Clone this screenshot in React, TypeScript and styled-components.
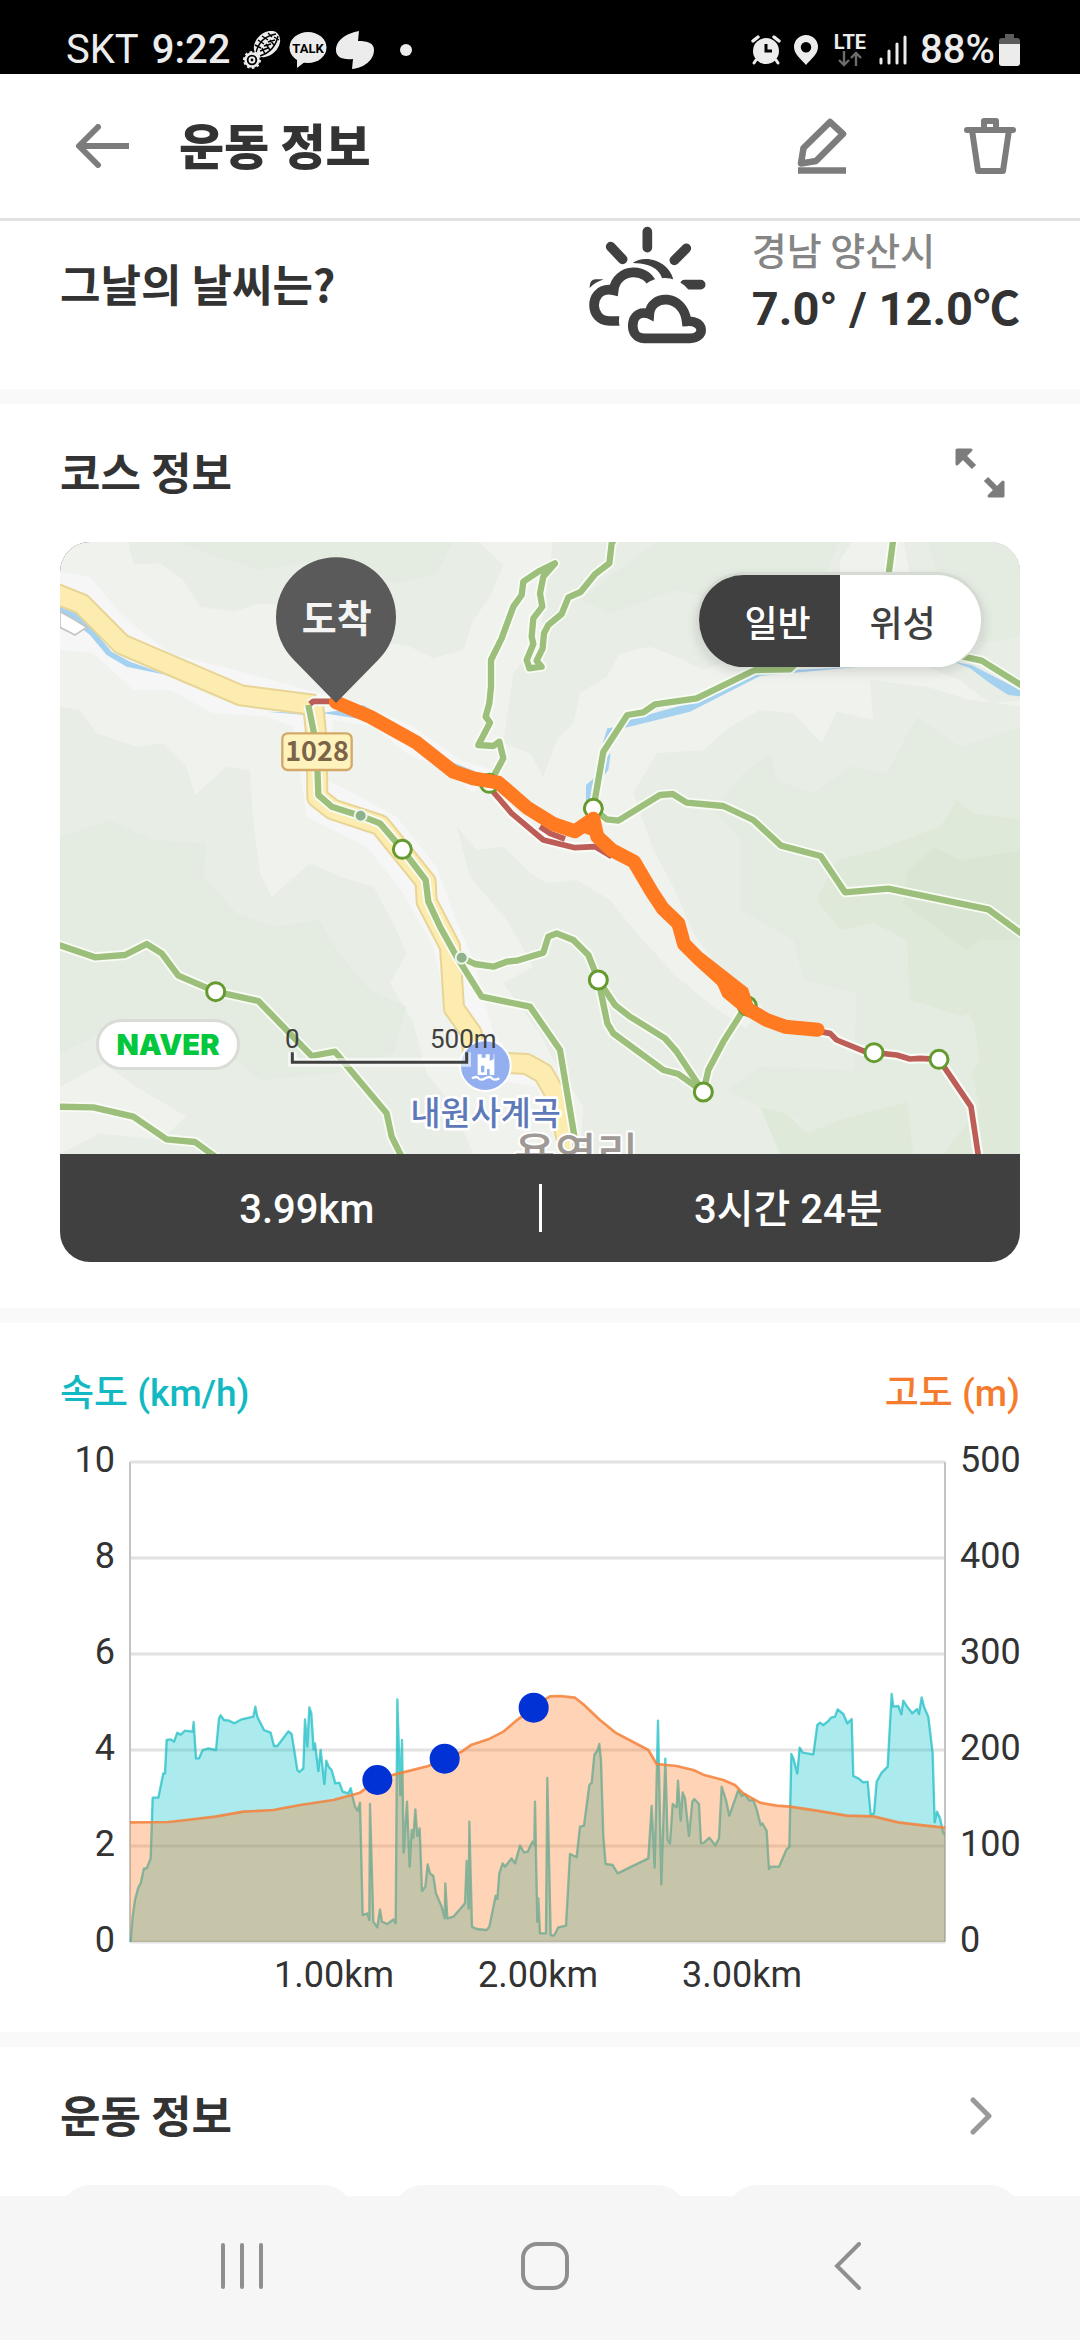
import React, { useState } from "react";
import styled, { createGlobalStyle } from "styled-components";

const sans = `"Noto Sans CJK KR", "Noto Sans", sans-serif`;
const mixed = `Roboto, "Noto Sans CJK KR", sans-serif`;
const roboto = `Roboto, "Noto Sans", sans-serif`;

const color = {
  ink: "#333333",
  dark: "#404040",
  grey: "#7c7c7c",
  band: "#f9f9f9",
  soft: "#f6f6f6",
  teal: "#12b9c2",
  orange: "#f57c2e",
};

const GlobalStyle = createGlobalStyle`
  * { box-sizing: border-box; }
  body { margin: 0; background: #fff; font-family: ${sans}; color: ${color.ink}; }
  h1, h2, p { margin: 0; }
  button { border: 0; padding: 0; background: none; font: inherit; color: inherit; cursor: pointer; }
  svg { display: block; flex: none; }
`;

const Screen = styled.div`
  height: 100vh;
  display: flex;
  flex-direction: column;
  overflow: hidden;
`;

/* ---------- status bar ---------- */

const StatusBar = styled.div`
  height: 74px;
  flex: none;
  display: flex;
  justify-content: space-between;
  padding: 25px 60px 0 66px;
  background: #000;
  color: #ececec;
  font: 400 40px/50px ${roboto};
`;

const StatusGroup = styled.div<{ $gap: number }>`
  display: flex;
  align-items: center;
  gap: ${(p) => p.$gap}px;
`;

const Strong = styled.span`
  font-weight: 500;
`;

const Clock = styled(Strong)`
  margin: 0 5px;
`;

const Network = styled.div`
  display: flex;
  flex-direction: column;
  align-items: center;
  margin-left: 3px;
  font: 700 20px/18px ${roboto};
`;

/* ---------- app bar ---------- */

const AppBar = styled.header`
  height: 147px;
  flex: none;
  display: flex;
  align-items: center;
  padding: 0 60px 0 72px;
  border-bottom: 3px solid #e2e2e2;
`;

const Title = styled.h1`
  flex: 1;
  margin-left: 47px;
  padding-bottom: 4px;
  font-size: 49px;
  line-height: 60px;
  font-weight: 900;
`;

const IconButton = styled.button`
  width: 60px;
  height: 60px;
  display: flex;
  align-items: center;
  justify-content: center;
  color: ${color.grey};
`;

const Actions = styled.div`
  display: flex;
  gap: 108px;
`;

/* ---------- content ---------- */

const Content = styled.main`
  flex: 1;
  min-height: 0;
  overflow-y: auto;
  scrollbar-width: none;
`;

const Section = styled.section<{ $last?: boolean }>`
  padding: 0 60px;
  border-bottom: ${(p) => (p.$last ? "0" : `15px solid ${color.band}`)};
`;

const SectionTitle = styled.h2`
  padding-bottom: 4px;
  font-size: 44px;
  line-height: 54px;
  font-weight: 700;
`;

const WeatherSection = styled(Section)`
  display: flex;
  justify-content: space-between;
  align-items: flex-start;
  height: 183px;
  padding-top: 5px;
`;

const WeatherTitle = styled(SectionTitle)`
  margin-top: 30px;
`;

const Weather = styled.div`
  display: flex;
  gap: 46px;
`;

const Place = styled.p`
  font-size: 38px;
  line-height: 46px;
  font-weight: 500;
  color: #858585;
`;

const Temperature = styled.p`
  font: 700 47px/74px ${mixed};
  white-space: nowrap;
`;

const SectionHead = styled.div`
  height: 138px;
  display: flex;
  align-items: center;
  justify-content: space-between;
  padding-right: 9px;
`;

/* ---------- course card ---------- */

const CourseSection = styled(Section)`
  padding-bottom: 46px;
`;

const CourseCard = styled.div`
  border-radius: 30px;
  overflow: hidden;
  background: ${color.dark};
`;

const MapArea = styled.div`
  position: relative;
`;

const MapSvg = styled.svg`
  width: 100%;
  height: auto;
`;

const MapToggle = styled.div`
  position: absolute;
  top: 30px;
  right: 36px;
  display: flex;
  border: 3px solid #d5dad2;
  border-bottom-width: 0;
  border-radius: 50px;
  overflow: hidden;
  box-shadow: 0 5px 12px rgba(0, 0, 0, 0.12);
`;

const ToggleButton = styled.button<{ $on: boolean }>`
  width: 141px;
  height: 92px;
  font-size: 36px;
  line-height: 44px;
  font-weight: 500;
  background: ${(p) => (p.$on ? color.dark : "#fff")};
  color: ${(p) => (p.$on ? "#fff" : color.dark)};
  &:first-child { padding-left: 16px; }
  &:last-child { padding-right: 16px; }
`;

const Naver = styled.a`
  position: absolute;
  left: 36px;
  bottom: 84px;
  width: 144px;
  height: 51px;
  display: flex;
  align-items: center;
  justify-content: center;
  border: 3px solid #d9dcd6;
  border-radius: 26px;
  background: #fff;
  color: #03c73c;
  font: 900 29px/36px Inter, sans-serif;
  text-decoration: none;
`;

const Stats = styled.div`
  height: 108px;
  display: flex;
  align-items: center;
  color: #fff;
  font: 500 40px/56px ${mixed};
`;

const Stat = styled.p`
  flex: 1;
  padding: 3px 0 0 15px;
  text-align: center;
`;

const StatRule = styled.span`
  width: 3px;
  height: 48px;
  background: #fff;
`;

/* ---------- chart ---------- */

const ChartSection = styled(Section)`
  padding-bottom: 32px;
`;

const ChartHead = styled.div`
  display: flex;
  justify-content: space-between;
  padding: 49px 0 14px;
`;

const SeriesName = styled.h2<{ $color: string }>`
  font: 500 37px/44px ${mixed};
  color: ${(p) => p.$color};
`;

const ChartSvg = styled.svg`
  width: 100%;
  height: auto;
`;

/* ---------- bottom ---------- */

const Cards = styled.div`
  display: grid;
  grid-template-columns: repeat(3, 1fr);
  gap: 40px;
`;

const Card = styled.div`
  height: 200px;
  border-radius: 30px;
  background: ${color.soft};
`;

const NavBar = styled.nav`
  height: 144px;
  flex: none;
  display: grid;
  grid-template-columns: repeat(3, 1fr);
  place-items: center;
  padding: 0 80px 4px 90px;
  background: ${color.soft};
`;

const NavButton = styled(IconButton)`
  color: #8f8f8f;
`;

/* ---------- icons ---------- */

const TreadIcon = () => (
  <svg width="38" height="38" viewBox="0 0 38 38" fill="none" stroke="#ececec">
    <ellipse cx="24" cy="13" rx="15" ry="11" transform="rotate(-45 24 13)" fill="#ececec" stroke="none" />
    <g stroke="#000" strokeWidth="1.4">
      <path d="M13 22C15 12 22 5 33 3M17 25C26 22 33 15 35 5" />
      <path d="M12 14l6 3M15 9l6 4M19 5l6 4M25 2l4 4M19 17l3 6M23 13l4 6M27 9l4 5M31 6l5 3M17 20l8-3M21 15l7-2M25 11l7-2" />
    </g>
    <circle cx="9" cy="29" r="6.5" strokeWidth="2.5" />
    <circle cx="9" cy="29" r="8" strokeWidth="2" strokeDasharray="2.6 2.4" />
    <circle cx="9" cy="29" r="2.4" strokeWidth="2" />
  </svg>
);

const TalkIcon = () => (
  <svg width="38" height="36" viewBox="0 0 38 36">
    <ellipse cx="19" cy="15.5" rx="18.5" ry="15.5" fill="#ececec" />
    <path d="M8 24l0 12 9-7z" fill="#ececec" />
    <text x="19" y="20.5" textAnchor="middle" fontFamily="Roboto, sans-serif" fontWeight="700" fontSize="13" fill="#000">TALK</text>
  </svg>
);

const LeafIcon = () => (
  <svg width="40" height="38" viewBox="0 0 40 38" fill="#ececec">
    <path d="M24 0C12 2 1 9 1 19c0 7 6 10 17 9l-1 10c12-1 22-9 22-19 0-7-6-9-16-9z" />
  </svg>
);

const DotIcon = () => (
  <svg width="50" height="38" viewBox="0 0 50 38"><circle cx="23" cy="19" r="6" fill="#ececec" /></svg>
);

const AlarmIcon = () => (
  <svg width="30" height="30" viewBox="0 0 30 30" fill="none" stroke="#ececec" strokeLinecap="round">
    <circle cx="15" cy="16" r="13" fill="#ececec" stroke="none" />
    <path d="M2 6l5-4M28 6l-5-4" strokeWidth="3.4" />
    <path d="M5 25l-2 3M25 25l2 3" strokeWidth="3" />
    <path d="M15 9v7h6" stroke="#000" strokeWidth="3" strokeLinecap="butt" />
  </svg>
);

const PlaceIcon = () => (
  <svg width="24" height="30" viewBox="0 0 24 30" fill="#ececec">
    <path fillRule="evenodd" d="M12 0a12 12 0 0 0-12 12c0 7 7 12 12 18 5-6 12-11 12-18A12 12 0 0 0 12 0zm0 7a5 5 0 1 1 0 10.500A5 5 0 0 1 12 7z" />
  </svg>
);

const DataIcon = () => (
  <svg width="24" height="16" viewBox="0 0 24 16" fill="none" stroke="#6c6c6c" strokeWidth="2.4">
    <path d="M6 0v14M1 9l5 5 5-5M18 15V2M13 7l5-5 5 5" />
  </svg>
);

const SignalIcon = () => (
  <svg width="28" height="30" viewBox="0 0 28 30" stroke="#ececec" strokeWidth="3" strokeLinecap="round">
    <path d="M2 24v4M10 16v12M18 9v19M26 2v26" />
  </svg>
);

const BatteryIcon = () => (
  <svg width="21" height="32" viewBox="0 0 21 32">
    <path d="M6 0h9v4h3a3 3 0 0 1 3 3v4H0V7a3 3 0 0 1 3-3h3z" fill="#5c5c5c" />
    <path d="M0 10h21v19a3 3 0 0 1-3 3H3a3 3 0 0 1-3-3z" fill="#ececec" />
  </svg>
);

const BackIcon = () => (
  <svg width="54" height="44" viewBox="0 0 54 44" fill="none" stroke="currentColor" strokeWidth="6">
    <path d="M54 22H4" />
    <path d="M23 3L4 22l19 19" strokeLinecap="round" strokeLinejoin="round" />
  </svg>
);

const PencilIcon = () => (
  <svg width="50" height="56" viewBox="0 0 50 56" fill="none" stroke="currentColor" strokeWidth="6.500" strokeLinejoin="round">
    <path d="M4 45.500L6.500 30 33 4 46 16 19 43z" />
    <path d="M1 52.500h48" />
  </svg>
);

const TrashIcon = () => (
  <svg width="52" height="56" viewBox="0 0 52 56" fill="none" stroke="currentColor" strokeWidth="6" strokeLinejoin="round">
    <path d="M3 12h46" strokeLinecap="round" />
    <path d="M20 12V3h12v9M8 12l6 41h25l6-41" />
  </svg>
);

const WeatherIcon = () => (
  <svg width="117" height="118" viewBox="0 0 351 354" fill="none" stroke={color.dark} strokeWidth="29" strokeLinecap="round">
    <path d="M175 17v48M65 62l36 38M292 67l-36 36M287 176h48" />
    <path d="M2 186c0-18 6-26 18-26h24C28 166 12 174 2 186z" fill={color.dark} stroke="none" />
    <path d="M131 111c40-30 124-2 124 68h-30c-6-44-30-66-94-68z" fill={color.dark} stroke="none" />
    <path d="M99 285H62c-62 0-62-94-2-94 7 0 10 1 14 2 8-70 108-72 119-5" strokeLinecap="butt" fill="#fff" />
    <path d="M170 335c-72 0-70-98-8-98 10-74 120-74 130 6 60 4 58 92 4 92z" stroke="#fff" strokeWidth="52" />
    <path d="M165 335c-45 0-45-76 0-76 8 0 14 2 16 3 4-60 102-62 112 22 56-4 56 51 10 51z" fill="#fff" transform="translate(0 2)" />
  </svg>
);

const ExpandIcon = () => (
  <svg width="52" height="50" viewBox="0 0 52 50" fill="currentColor" stroke="currentColor" strokeWidth="6">
    <path d="M2 2h14L2 16zM48 48H34l14-14z" strokeWidth="3" strokeLinejoin="round" />
    <path d="M5 5l14 14M31 31l14 14" />
  </svg>
);

const ChevronIcon = () => (
  <svg width="24" height="38" viewBox="0 0 24 38" fill="none" stroke="#999" strokeWidth="5" strokeLinecap="round" strokeLinejoin="round">
    <path d="M4 3l16 16L4 35" />
  </svg>
);

/* ---------- map ---------- */

const trails = [
  "M745 495L770 620 775 765 815 800 900 827 960 850 1027 928 1097 1020 1105 1085 1140 1160 1190 1250 1265 1370 1410 1400 1500 1530 1545 1800 1550 1860",
  "M1205 1253L1245 1272 1300 1280 1340 1265 1370 1262 1450 1238 1465 1190 1490 1180 1540 1200 1585 1245 1615 1320 1665 1395 1710 1430 1815 1495 1850 1535 1930 1656",
  "M1615 1320L1642 1450 1660 1480 1810 1590 1855 1602 1930 1656 1945 1590 1990 1505 2060 1395",
  "M-10 1213L105 1252 195 1245 260 1212 305 1240 355 1307 467 1355 595 1383 755 1548 825 1535 980 1720 995 1790 1030 1860",
  "M-10 1700L100 1702 220 1730 320 1798 405 1806 480 1860",
  "M1300 710L1330 655 1318 605 1300 618 1255 615 1290 548 1277 530 1288 490 1293 440 1293 360 1325 295 1360 200 1385 165 1390 125 1435 95 1485 70 1450 110 1440 160 1447 200 1420 235 1415 290 1420 312 1400 360 1408 385 1445 380 1430 362 1448 325 1452 280 1465 255 1505 222 1525 172 1562 156 1605 103 1648 70 1655 10 1665 -5",
  "M1600 805L1630 635 1702 525 1750 517 1785 493 1910 475 2085 390 2190 388 2240 340 2600 320 2710 350 2765 362 2890 440",
  "M1600 805L1640 838 1675 842 1800 765 1838 762 1880 788 1990 798 2080 840 2163 917 2282 948 2355 1057 2485 1046 2785 1108 2890 1185",
  "M2485 110L2500 -5",
];

const redPaths = [
  "M750 492L760 484 830 484",
  "M1295 750L1355 820 1450 900 1545 923 1605 920 1655 950",
  "M1440 860L1470 880 1515 897",
  "M2280 1475L2310 1480 2330 1500 2415 1535 2510 1545 2550 1557 2580 1555 2637 1558 2733 1700 2757 1860",
];

const lakes = [
  "M0 200L60 225 100 270 155 335 210 365 320 405 200 380 140 345 90 285 0 215z",
  "M620 515L740 525 850 510 910 495 1040 575 1160 660 1260 700 1180 690 1050 610 920 540 790 520z",
  "M1690 565L1705 540 1890 490 2090 395 2400 380 2100 408 1890 515z",
  "M2680 365L2735 375 2890 455 2890 470 2845 465 2790 430 2730 385z",
  "M1628 610L1642 565 1665 562 1638 625zM1640 650L1652 640 1645 690 1628 710zM1578 735L1605 712 1595 780 1578 785z",
  "M1390 790L1440 830 1480 850 1430 830z",
];

const terrain: [string, string][] = [
  ["#e8ede6", "M205 0H1250L1330 75 1290 170 1240 240 1210 330 1120 355 1050 320 930 300 850 200 600 190 520 215 420 200 370 120 300 70 220 72z"],
  ["#e4ece1", "M340 0H1180L1130 100 1010 130 780 60 600 90 470 50z"],
  ["#e8ede6", "M1480 0H2380L2340 60 2340 230 2480 300 2200 350 2080 340 1930 390 1850 350 1770 320 1680 340 1640 410 1560 460 1540 550 1490 600 1450 710 1410 640 1330 610 1360 400 1440 300z"],
  ["#e4ece1", "M1800 0H2340L2290 110 2150 150 2040 200 1850 150 1650 220 1560 180 1660 100z"],
  ["#e8ede6", "M2530 0H2890V480L2790 490 2700 420 2600 380 2560 160z"],
  ["#e4ece1", "M2600 0H2890V290L2770 310 2660 180z"],
  ["#e8ede6", "M0 500L60 510 110 580 230 620 310 610 380 680 405 765 500 680 570 690 580 850 600 1000 635 1070 750 970 840 1010 940 1040 1000 1150 1040 1240 990 1330 1060 1450 1100 1600 1180 1700 1240 1842H0z"],
  ["#e4ece1", "M0 890L150 840 280 900 440 910 430 1010 530 1120 640 1160 780 1140 830 1230 930 1350 1040 1400 1000 1540 830 1600 600 1620 460 1500 300 1560 130 1480 0 1540z"],
  ["#f0f2ed", "M0 1640L130 1570 230 1640 380 1730 300 1800 120 1780 0 1842z"],
  ["#e8ede6", "M1190 860L1250 930 1330 920 1410 1000 1460 1030 1550 1020 1650 1080 1730 1180 1850 1310 1960 1400 2080 1480 2150 1842H1560L1570 1700 1480 1560 1440 1480 1330 1330 1420 1280 1340 1140 1230 1010z"],
  ["#e8ede6", "M2430 420L2600 440 2730 480 2890 500V1842H2060L2030 1500 2110 1400 1980 1290 1900 1180 1840 1040 1780 930 1720 760 1790 640 1930 630 2010 560 2100 510 2200 520 2285 610 2330 515 2440 540z"],
  ["#e4ece1", "M2050 700L2130 640 2150 720 2260 760 2370 680 2480 700 2570 530 2700 620 2890 560V1842H2180L2220 1740 2100 1700 2000 1650 2100 1580 2380 1590 2390 1360 2230 1320 2200 1200 2040 1110 2040 900 1960 810z"],
  ["#dfe9d9", "M2330 960L2450 930 2640 860 2690 780 2740 820 2890 840V1842H2160L2100 1700 2180 1720 2240 1780 2340 1740 2560 1680 2690 1660 2760 1560 2740 1440 2550 1380 2540 1200 2440 1150 2340 1170 2270 1080z"],
  ["#d9e6d3", "M2540 1000L2620 920 2700 960 2890 930V1200L2760 1200 2720 1230 2650 1180 2530 1090z"],
  ["#e4ece1", "M2540 1480L2730 1420 2720 1540 2760 1700 2650 1842H2560L2540 1680z"],
];

const valley = "M0 95L90 110 190 230 330 340 560 400 710 440 900 490 1060 560 1200 660 1300 690 1240 760 1150 690 1040 640 940 560 820 540 800 720 880 760 1010 830 1130 980 1180 1120 1240 1260 1300 1480 1380 1580 1540 1700 1500 1842 1430 1640 1300 1620 1180 1500 1120 1220 1030 1060 920 920 740 830 700 560 620 530 460 520 330 450 220 450 100 340 0 330z";

const stations = [
  [1027, 928], [1288, 730], [1600, 805], [467, 1355], [1615, 1320],
  [1930, 1656], [2442, 1538], [2637, 1558], [2062, 1398],
];

const roadWide = "M-20 158L65 192 185 313 542 466 765 495";
const roadNarrow = "M760 500L770 600 772 772 818 808 960 855 1097 1025 1100 1085 1170 1220 1182 1405 1235 1480 1240 1560 1330 1568 1400 1572 1450 1600 1490 1670 1535 1860";

const CourseMap = () => (
  <MapSvg viewBox="0 6 2880 1836" role="img" aria-label="코스 지도">
    <rect y="0" width="2880" height="1842" fill="#f0f2ed" />
    {terrain.map(([fill, d]) => <path key={d} d={d} fill={fill} />)}
    <path d={valley} fill="#f5f6f5" />
    {lakes.map((d) => <path key={d} d={d} fill="#a5d1f0" />)}
    <path d="M0 215L45 240 80 262 45 285 0 262z" fill="#fff" stroke="#c4c4c4" strokeWidth="5" />

    <g fill="none" strokeLinejoin="round">
      <path d={roadNarrow} stroke="#e8d596" strokeWidth="66" />
      <path d={roadWide} stroke="#e8d596" strokeWidth="66" />
      <path d={roadNarrow} stroke="#fcecb0" strokeWidth="54" />
      <path d={roadWide} stroke="#fcecb0" strokeWidth="54" />
      <g stroke="#f9fbf5" strokeWidth="30">
        {trails.map((d) => <path key={d} d={d} />)}
        {redPaths.map((d) => <path key={d} d={d} />)}
      </g>
      <g stroke="#9dbf7c" strokeWidth="19">
        {trails.map((d) => <path key={d} d={d} />)}
      </g>
      <g stroke="#bd5d58" strokeWidth="17">
        {redPaths.map((d) => <path key={d} d={d} />)}
      </g>
    </g>

    {stations.map(([x, y]) => (
      <circle key={`${x}-${y}`} cx={x} cy={y} r="27" fill="#fff" stroke="#649a2e" strokeWidth="9" />
    ))}
    <g fill="#8fb28d" stroke="#eef5ea" strokeWidth="6">
      <circle cx="902" cy="827" r="18" />
      <circle cx="1205" cy="1253" r="18" />
    </g>

    <g fontFamily={sans} fontWeight="700">
      <rect x="667" y="580" width="208" height="110" rx="16" fill="#fff3bd" stroke="#d3a968" strokeWidth="7" />
      <text x="771" y="664" textAnchor="middle" fontSize="81" fill="#7b6447">1028</text>

      <circle cx="1276" cy="1577" r="76" fill="#94aff0" stroke="#fff" strokeWidth="6" />
      <path d="M1253 1543h12v10h12v-10h12v20l12-6v-14h-6 8v62h-14v-18h-8v18h-28z" fill="#fff" />
      <path d="M1263 1577h10v20h-10z" fill="#94aff0" />
      <path d="M1236 1615q14-8 20 0t20 0 20 0 22 0" fill="none" stroke="#fff" strokeWidth="7" />
      <g paintOrder="stroke" stroke="#fff" strokeLinejoin="round">
        <text x="1548" y="1894" textAnchor="middle" fontSize="135" fontWeight="500" fill="#a09a97" strokeWidth="12">용영리</text>
        <text x="1277" y="1754" textAnchor="middle" fontSize="98" fontWeight="500" fill="#5e79b8" strokeWidth="16">내원사계곡</text>
      </g>
    </g>

    <path d="M828 487L930 530 1070 608 1180 695 1240 715 1315 728 1400 802 1480 852 1545 874 1600 836 1612 890 1655 930 1722 965 1775 1055 1808 1105 1855 1150 1872 1212 1915 1255 2000 1332 2060 1405 2120 1440 2175 1460 2273 1469" fill="none" stroke="#ff7a20" strokeWidth="42" strokeLinejoin="round" strokeLinecap="round" />
    <path d="M1545 870L1600 825 1615 895zM1930 1240L2064 1345 2082 1400 2060 1430 1988 1370z" fill="#ff7a20" />

    <path d="M828 489L701 359A180 180 0 1 1 955 359z" fill="#5a5a5a" />
    <text x="830" y="275" textAnchor="middle" fontFamily={sans} fontWeight="700" fontSize="114" fill="#f4f4f4">도착</text>

    <path d="M697 1537v30h523v-30" fill="none" stroke="#fff" strokeOpacity="0.6" strokeWidth="26" />
    <path d="M697 1537v30h523v-30" fill="none" stroke="#404040" strokeWidth="9" />
    <g fontFamily={roboto} fontSize="78" fill="#404040" textAnchor="middle">
      <text x="697" y="1523">0</text>
      <text x="1210" y="1523">500m</text>
    </g>
  </MapSvg>
);

/* ---------- chart ---------- */

/* Samples are in thirds of a pixel; the second leg is measured from LEG_START. */
const LEG_START = 1290;

const toPoints = (first: string, second: string) => {
  const parse = (s: string, dx: number) =>
    s.trim().split(/\s+/).map((pair) => {
      const [x, y] = pair.split(",").map(Number);
      return `${x + dx},${y}`;
    });
  return [...parse(first, 0), ...parse(second, LEG_START)].join(" ");
};

const speed = toPoints(
  `92,876 98,800 105,750 115,712 122,700 132,655 140,655 152,625 158,443 175,443 190,370 195,370 200,270 212,268 222,275 232,248 242,254 255,242 278,245 281,216 288,325 297,325 308,300 325,295 348,300 357,205 362,196 372,210 388,212 403,220 425,208 460,200 466,170 472,200 492,240 512,248 522,288 532,288 565,244 575,252 592,360 598,366 610,355 615,208 622,290 628,172 634,190 641,298 645,280 655,363 662,300 673,402 679,332 686,350 695,360 706,400 718,398 728,425 745,430 752,415 765,470 773,482 780,458 788,795 802,790 808,810 810,462 820,815 832,832 840,778 846,815 862,822 880,808 887,820 892,148 901,435 906,270 911,608 921,455 929,650 935,540 940,563 946,478 952,558 959,535 966,723 976,710 983,643 990,670 1000,678 1008,730 1025,770 1034,805 1036,700 1042,805 1060,800 1085,772 1095,760 1100,633 1106,776 1108,515 1116,830 1130,837 1160,840 1168,830 1187,737 1192,747 1198,670 1208,640 1215,650 1235,625 1245,640 1260,587 1272,607 1283,605 1297,575 1303,583 1305,455 1312,815 1315,745 1320,850 1338,850`,
  `52,384 62,855 72,857 85,832 108,827 120,612 140,622 150,530 162,527 178,405 185,398 193,315 203,300 208,282 213,330 220,560 227,642 248,645 263,670 355,625 365,468 374,653 384,212 394,703 406,326 413,570 420,580 428,462 440,472 444,392 452,512 458,427 465,445 477,558 487,455 493,447 507,462 513,580 522,578 538,563 556,586 567,565 575,410 588,450 598,497 625,420 635,438 645,432 658,452 670,450 680,478 692,525 697,520 710,542 717,657 722,650 747,650 770,597 778,592 784,312 790,325 802,370 809,293 818,308 850,313 862,225 870,218 880,225 893,215 903,203 915,200 923,178 940,192 952,220 965,207 970,378 985,385 1000,397 1013,395 1022,493 1032,490 1040,395 1055,368 1073,350 1085,132 1090,170 1105,168 1114,193 1120,152 1130,168 1147,190 1161,177 1167,192 1175,142 1182,170 1195,200 1208,310 1214,517 1221,485 1230,505 1240,550 1245,550`
);

const elevation = toPoints(
  `90,517 205,516 260,510 345,500 430,485 520,480 600,465 700,450 780,428 832,390 885,373 985,348 1034,326 1085,305 1115,284 1165,268 1210,245 1245,215 1301,173 1335,148`,
  `60,139 90,138 135,143 160,163 210,210 255,247 355,300 380,342 440,348 490,360 520,374 580,390 615,405 640,430 690,458 740,467 780,470 860,482 950,497 1030,499 1105,517 1180,526 1245,533`
);

const marks = [[832, 390], [1034, 326], [1301, 173]];
const rows = [0, 1, 2, 3, 4, 5];

const Chart = () => (
  <ChartSvg viewBox="0 0 960 570" role="img" aria-label="속도와 고도 그래프">
    <g stroke="#e2e2e2" strokeWidth="3">
      {rows.map((i) => <path key={i} d={`M70 ${32 + i * 96}H885`} />)}
    </g>
    <path d="M70 32V512M885 32V512" stroke="#c4c4c4" strokeWidth="2" />
    <g transform="translate(40 220) scale(0.33333)" strokeLinejoin="round">
      <polygon points={`90,876 ${speed} 2535,876`} fill="#00bec8" fillOpacity="0.33" />
      <polyline points={speed} fill="none" stroke="#12bac2" strokeOpacity="0.7" strokeWidth="7" />
      <polygon points={`${elevation} 2535,876 90,876`} fill="#ff7a20" fillOpacity="0.33" />
      <polyline points={elevation} fill="none" stroke="#f5803a" strokeOpacity="0.85" strokeWidth="8" />
      {marks.map(([x, y]) => <circle key={x} cx={x} cy={y} r="45" fill="#0032d6" />)}
    </g>
    <g fontFamily={roboto} fontSize="36" fill={color.ink}>
      {rows.map((i) => (
        <React.Fragment key={i}>
          <text x="55" y={42 + i * 96} textAnchor="end">{10 - i * 2}</text>
          <text x="900" y={42 + i * 96}>{500 - i * 100}</text>
        </React.Fragment>
      ))}
      {[1, 2, 3].map((km) => (
        <text key={km} x={70 + km * 204} y="557" textAnchor="middle">{km.toFixed(2)}km</text>
      ))}
    </g>
  </ChartSvg>
);

/* ---------- page ---------- */

export default function App() {
  const [view, setView] = useState("일반");
  return (
    <Screen>
      <GlobalStyle />
      <StatusBar>
        <StatusGroup $gap={8}>
          <span>SKT</span>
          <Clock>9:22</Clock>
          <TreadIcon />
          <TalkIcon />
          <LeafIcon />
          <DotIcon />
        </StatusGroup>
        <StatusGroup $gap={13}>
          <AlarmIcon />
          <PlaceIcon />
          <Network>
            LTE
            <DataIcon />
          </Network>
          <SignalIcon />
          <StatusGroup $gap={4}>
            <Strong>88%</Strong>
            <BatteryIcon />
          </StatusGroup>
        </StatusGroup>
      </StatusBar>

      <AppBar>
        <IconButton aria-label="뒤로"><BackIcon /></IconButton>
        <Title>운동 정보</Title>
        <Actions>
          <IconButton aria-label="수정"><PencilIcon /></IconButton>
          <IconButton aria-label="삭제"><TrashIcon /></IconButton>
        </Actions>
      </AppBar>

      <Content>
        <WeatherSection>
          <WeatherTitle>그날의 날씨는?</WeatherTitle>
          <Weather>
            <WeatherIcon />
            <div>
              <Place>경남 양산시</Place>
              <Temperature>7.0° / 12.0℃</Temperature>
            </div>
          </Weather>
        </WeatherSection>

        <CourseSection>
          <SectionHead>
            <SectionTitle>코스 정보</SectionTitle>
            <IconButton aria-label="크게 보기"><ExpandIcon /></IconButton>
          </SectionHead>
          <CourseCard>
            <MapArea>
              <CourseMap />
              <MapToggle>
                {["일반", "위성"].map((name) => (
                  <ToggleButton key={name} $on={view === name} aria-pressed={view === name} onClick={() => setView(name)}>
                    {name}
                  </ToggleButton>
                ))}
              </MapToggle>
              <Naver href="#map">NAVER</Naver>
            </MapArea>
            <Stats>
              <Stat>3.99km</Stat>
              <StatRule />
              <Stat>3시간 24분</Stat>
            </Stats>
          </CourseCard>
        </CourseSection>

        <ChartSection>
          <ChartHead>
            <SeriesName $color={color.teal}>속도 (km/h)</SeriesName>
            <SeriesName $color={color.orange}>고도 (m)</SeriesName>
          </ChartHead>
          <Chart />
        </ChartSection>

        <Section $last>
          <SectionHead>
            <SectionTitle>운동 정보</SectionTitle>
            <IconButton aria-label="더 보기"><ChevronIcon /></IconButton>
          </SectionHead>
          <Cards>
            <Card />
            <Card />
            <Card />
          </Cards>
        </Section>
      </Content>

      <NavBar>
        <NavButton aria-label="최근 앱">
          <svg width="42" height="46" viewBox="0 0 42 46" stroke="currentColor" strokeWidth="4" strokeLinecap="round">
            <path d="M2 2v42M21 2v42M40 2v42" />
          </svg>
        </NavButton>
        <NavButton aria-label="홈">
          <svg width="48" height="48" viewBox="0 0 48 48" fill="none" stroke="currentColor" strokeWidth="4">
            <rect x="2" y="2" width="44" height="44" rx="14" />
          </svg>
        </NavButton>
        <NavButton aria-label="이전">
          <svg width="28" height="48" viewBox="0 0 28 48" fill="none" stroke="currentColor" strokeWidth="4" strokeLinecap="round">
            <path d="M25 2L3 24l22 22" />
          </svg>
        </NavButton>
      </NavBar>
    </Screen>
  );
}
